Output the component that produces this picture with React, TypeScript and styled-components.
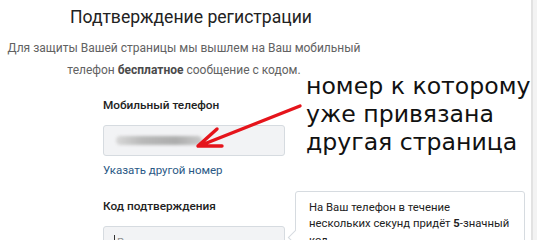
import React from "react";
import styled, { createGlobalStyle } from "styled-components";

const GlobalStyle = createGlobalStyle`
  html, body {
    margin: 0;
    padding: 0;
    background: #ffffff;
    overflow: hidden;
  }
  * {
    box-sizing: border-box;
  }
`;

const Page = styled.div`
  display: flex;
  width: 537px;
  height: 240px;
  overflow: hidden;
  font-family: Roboto, "Liberation Sans", Arial, sans-serif;
  color: #222222;
`;

const Main = styled.div`
  position: relative;
  flex: 1;
  min-width: 0;
`;

const ScrollStrip = styled.div`
  width: 6px;
  background: #f3f3f3;
  border-left: 2px solid #e2e2e2;
`;

const Header = styled.header`
  width: 368px;
  padding-top: 5px;
  text-align: center;
`;

const Title = styled.h1`
  margin: 0;
  padding-left: 14px;
  font-size: 17.6px;
  line-height: 24px;
  font-weight: 400;
  color: #222222;
`;

const Lead = styled.p`
  margin: 8px 0 0;
  font-size: 12px;
  line-height: 22px;
  color: #626262;
  white-space: nowrap;

  b {
    font-weight: 700;
    color: #4a4a4a;
  }
`;

const Form = styled.div`
  display: flex;
  flex-direction: column;
  padding-left: 103px;
  margin-top: 16px;
`;

const Field = styled.div<{ $top?: number }>`
  display: flex;
  flex-direction: column;
  width: 182px;
  padding-top: ${(p) => p.$top ?? 0}px;
`;

const Label = styled.div`
  font-size: 11.8px;
  line-height: 16px;
  font-weight: 500;
  color: #222222;
`;

const InputBox = styled.div`
  display: flex;
  align-items: center;
  height: 31px;
  margin-top: 12px;
  padding: 0 10px;
  background: #f2f3f5;
  border: 1px solid #d6dbe0;
  border-radius: 3px;
  font-size: 11.5px;
  color: #939393;
  white-space: nowrap;
`;

const Smear = styled.span`
  display: block;
  width: 86px;
  height: 9px;
  margin-left: 2px;
  border-radius: 5px;
  background: linear-gradient(90deg, #d8d8d8 0%, #b9b9b9 30%, #adadad 70%, #c9c9c9 100%);
  filter: blur(1.6px);
`;

const Caret = styled.span`
  display: inline-block;
  width: 1px;
  height: 14px;
  margin-right: 2px;
  background: #333333;
`;

const Link = styled.a`
  margin-top: 6px;
  font-size: 11.5px;
  line-height: 16px;
  color: #2a5885;
  text-decoration: none;
`;

const CodeRow = styled.div`
  display: flex;
  align-items: flex-start;
  margin-top: 13px;
`;

const Hint = styled.div`
  position: relative;
  width: 230px;
  margin-left: 10px;
  padding: 8px 12px 10px 13px;
  background: #ffffff;
  border: 1px solid #d6dbe0;
  border-radius: 3px;
  font-size: 11.3px;
  line-height: 16.4px;
  color: #222222;
  white-space: nowrap;

  &::before {
    content: "";
    position: absolute;
    left: -6px;
    top: 40px;
    width: 10px;
    height: 10px;
    background: #ffffff;
    border-left: 1px solid #d6dbe0;
    border-bottom: 1px solid #d6dbe0;
    transform: rotate(45deg);
  }

  b {
    font-weight: 700;
  }
`;

const Annotation = styled.div`
  position: absolute;
  left: 306px;
  top: 72px;
  font-family: "DejaVu Sans", Verdana, sans-serif;
  font-size: 23.6px;
  line-height: 28px;
  color: #111111;
  white-space: nowrap;
`;

const ArrowLayer = styled.svg`
  position: absolute;
  left: 0;
  top: 0;
  pointer-events: none;
`;

export default function App() {
  return (
    <>
      <GlobalStyle />
      <Page>
        <Main>
          <Header>
            <Title>Подтверждение регистрации</Title>
            <Lead>
              Для защиты Вашей страницы мы вышлем на Ваш мобильный
              <br />
              телефон <b>бесплатное</b> сообщение с кодом.
            </Lead>
          </Header>

          <Form>
            <Field>
              <Label>Мобильный телефон</Label>
              <InputBox>
                <Smear />
              </InputBox>
              <Link href="#">Указать другой номер</Link>
            </Field>

            <CodeRow>
              <Field $top={7}>
                <Label>Код подтверждения</Label>
                <InputBox>
                  <Caret />
                  Введите код из смс
                </InputBox>
              </Field>
              <Hint>
                На Ваш телефон в течение
                <br />
                нескольких секунд придёт <b>5</b>-значный
                <br />
                код.
              </Hint>
            </CodeRow>
          </Form>

          <Annotation>
            номер к которому
            <br />
            уже привязана
            <br />
            другая страница
          </Annotation>

          <ArrowLayer width="531" height="240" viewBox="0 0 531 240">
            <path
              d="M300 106 L199 146 M217 129 L198 146 L222 146"
              fill="none"
              stroke="#e5141b"
              strokeWidth="3.4"
              strokeLinecap="round"
              strokeLinejoin="round"
            />
          </ArrowLayer>
        </Main>
        <ScrollStrip />
      </Page>
    </>
  );
}
